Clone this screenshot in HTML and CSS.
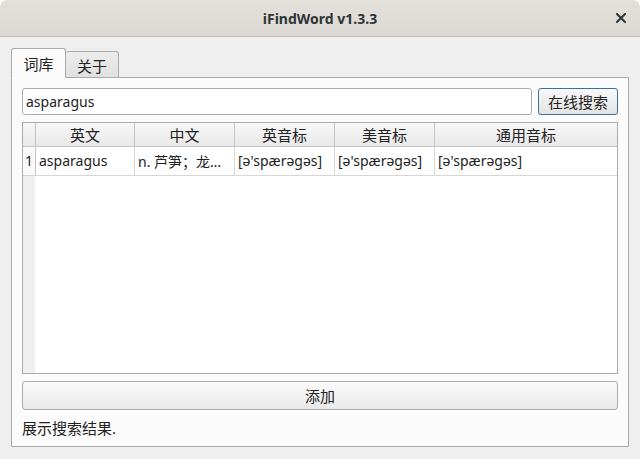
FILE: index.html
```html
<!DOCTYPE html>
<html lang="zh">
<head>
<meta charset="utf-8">
<title>iFindWord v1.3.3</title>
<link rel="stylesheet" href="styles.css">
</head>
<body>
<div class="titlebar">
  <span class="title">iFindWord v1.3.3</span>
  <span class="close">
    <svg width="10" height="10" viewBox="0 0 10 10"><path d="M1 1 L9 9 M9 1 L1 9" stroke="#2e3436" stroke-width="2" stroke-linecap="square"/></svg>
  </span>
</div>
<div class="window">
  <div class="tabs">
    <div class="tab tab-active cjk">词库</div>
    <div class="tab tab-inactive cjk">关于</div>
  </div>
  <div class="pane">
    <div class="search-row">
      <div class="input">asparagus</div>
      <button class="btn btn-default cjk">在线搜索</button>
    </div>
    <div class="table">
      <div class="grid header">
        <div class="hcell corner"></div>
        <div class="hcell cjk">英文</div>
        <div class="hcell cjk">中文</div>
        <div class="hcell cjk">英音标</div>
        <div class="hcell cjk">美音标</div>
        <div class="hcell cjk last">通用音标</div>
      </div>
      <div class="grid datarow">
        <div class="vcell">1</div>
        <div class="cell">asparagus</div>
        <div class="cell">n. 芦笋；龙…</div>
        <div class="cell">[ə'spærəgəs]</div>
        <div class="cell">[ə'spærəgəs]</div>
        <div class="cell last">[ə'spærəgəs]</div>
      </div>
      <div class="filler"><div class="vfill"></div></div>
    </div>
    <button class="btn btn-wide cjk">添加</button>
    <div class="status cjk">展示搜索结果.</div>
  </div>
</div>
</body>
</html>
```
FILE: styles.css
```css
html {
  background: #ffffff;
}
body {
  margin: 0;
  width: 640px;
  height: 459px;
  overflow: hidden;
  font-family: "Noto Sans", "Noto Sans CJK SC", sans-serif;
  font-size: 14px;
  color: #2a2a2a;
  display: flex;
  flex-direction: column;
}
.cjk {
  font-size: 15px;
}
.titlebar {
  height: 36px;
  border-bottom: 1px solid #c3bcb4;
  border-radius: 7px 7px 0 0;
  background: linear-gradient(#e3e0dc, #dcd9d5);
  display: flex;
  align-items: center;
  justify-content: center;
  position: relative;
  flex: none;
}
.title {
  font-weight: bold;
  font-size: 14px;
  color: #2e3436;
}
.close {
  position: absolute;
  right: 14px;
  top: 13px;
  width: 10px;
  height: 10px;
  display: flex;
}
.window {
  flex: 1;
  background: #efefef;
  padding: 0 11px;
  display: flex;
  flex-direction: column;
}
.tabs {
  display: flex;
  align-items: flex-end;
  margin-top: 11px;
  margin-bottom: -1px;
  position: relative;
  z-index: 1;
}
.tab {
  box-sizing: border-box;
  display: flex;
  align-items: center;
  justify-content: center;
  border: 1px solid #a9a9a9;
  border-radius: 3px 3px 0 0;
  color: #222;
}
.tab-active {
  width: 55px;
  height: 30px;
  background: #fbfbfb;
  border-bottom-color: #fbfbfb;
  padding-top: 1px;
}
.tab-inactive {
  width: 53px;
  height: 27px;
  border-left: none;
  background: linear-gradient(#ececec, #e0e0e0);
  padding-top: 1px;
}
.pane {
  height: 370px;
  box-sizing: border-box;
  border: 1px solid #a9a9a9;
  background: #fbfbfb;
  padding: 10px 10px 8px;
  display: flex;
  flex-direction: column;
}
.search-row {
  display: flex;
  gap: 6px;
  height: 27px;
}
.input {
  flex: 1;
  box-sizing: border-box;
  border: 1px solid #ababab;
  border-radius: 3px;
  background: #ffffff;
  padding: 0 3px;
  display: flex;
  align-items: center;
  color: #222;
}
.btn {
  box-sizing: border-box;
  font-family: "Noto Sans", "Noto Sans CJK SC", sans-serif;
  color: #222;
  border-radius: 3px;
  background: linear-gradient(#f8f8f8, #e3e3e3);
  padding: 0;
  margin: 0;
}
.btn-default {
  width: 80px;
  border: 1px solid #3f6e97;
}
.btn-wide {
  height: 29px;
  margin-top: 7px;
  border: 1px solid #ababab;
  background: linear-gradient(#fafafa, #e9e9e9);
}
.table {
  margin-top: 7px;
  height: 253px;
  box-sizing: border-box;
  border: 1px solid #ababab;
  background: #ffffff;
  display: flex;
  flex-direction: column;
}
.grid {
  display: grid;
  grid-template-columns: 13px 99px 100px 100px 100px 1fr;
}
.header {
  height: 24px;
  box-sizing: border-box;
  border-bottom: 1px solid #c4c4c4;
  background: linear-gradient(#f7f7f7, #e9e9e9);
}
.hcell {
  box-sizing: border-box;
  border-right: 1px solid #c4c4c4;
  display: flex;
  align-items: center;
  justify-content: center;
  color: #222;
}
.hcell.last,
.cell.last {
  border-right: none;
}
.datarow {
  height: 29px;
  box-sizing: border-box;
  border-bottom: 1px solid #d6d6d6;
}
.vcell {
  box-sizing: border-box;
  border-right: 1px solid #c4c4c4;
  background: #fafafa;
  display: flex;
  align-items: center;
  padding-left: 2px;
  color: #222;
}
.cell {
  box-sizing: border-box;
  border-right: 1px solid #d6d6d6;
  display: flex;
  align-items: center;
  padding-left: 3px;
  white-space: nowrap;
  overflow: hidden;
  color: #222;
}
.filler {
  flex: 1;
  display: flex;
}
.vfill {
  width: 12px;
  background: #efefef;
}
.status {
  margin-top: 8px;
  height: 20px;
  line-height: 20px;
  color: #222;
}
```
